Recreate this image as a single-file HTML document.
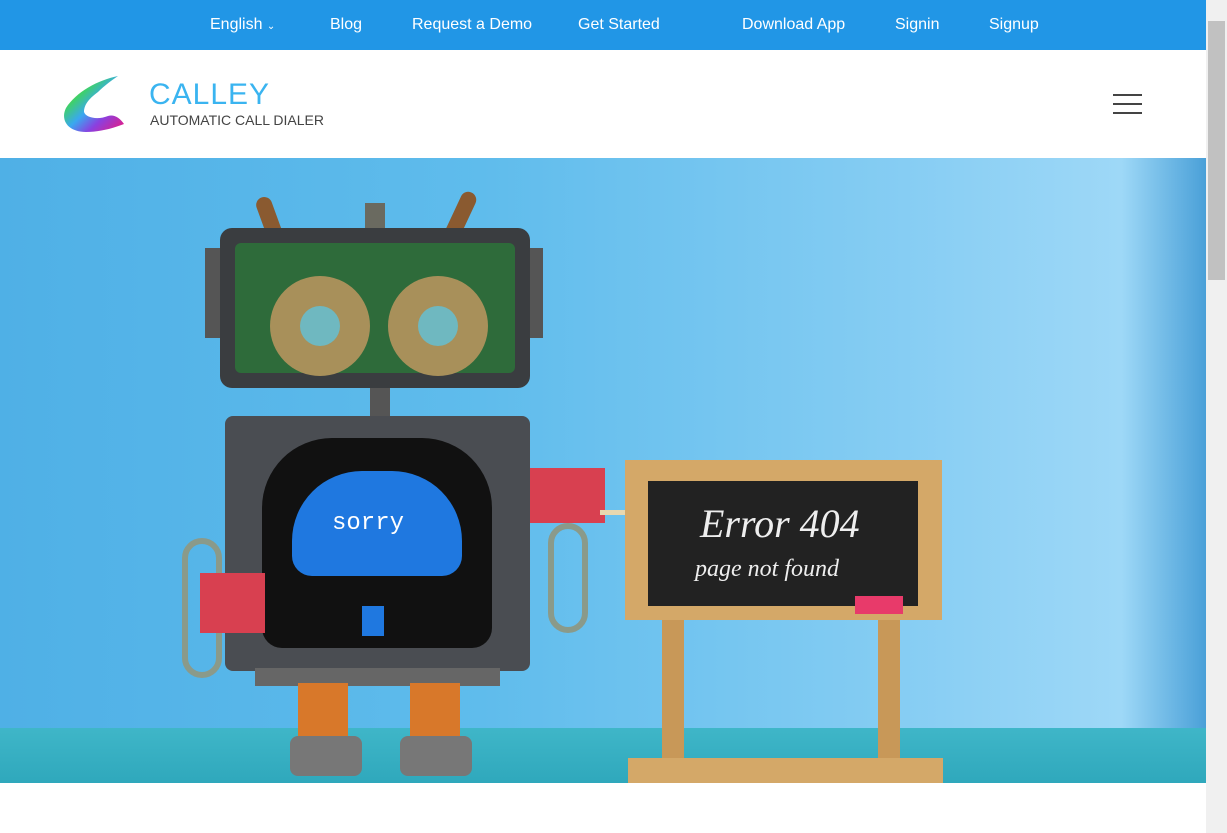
<!DOCTYPE html>
<html><head><meta charset="utf-8"><style>
*{margin:0;padding:0;box-sizing:border-box}
body{width:1227px;height:833px;overflow:hidden;background:#fff;font-family:"Liberation Sans",sans-serif;position:relative}
.top{position:absolute;left:0;top:0;width:1206px;height:50px;background:#2196e6}
.top span{position:absolute;top:16px;color:#fff;font-size:16px}
.sb{position:absolute;left:1206px;top:0;width:21px;height:833px;background:#f0f0f0}
.thumb{position:absolute;left:2px;top:21px;width:17px;height:259px;background:#c1c1c1}
.hero{position:absolute;left:0;top:158px;width:1206px;height:625px;background:linear-gradient(90deg,#4fb0e6 0%,#5fbcec 40%,#86cdf3 75%,#9ed8f7 93%,#4aa0d8 100%);overflow:hidden}
.floor{position:absolute;left:0;top:570px;width:100%;height:55px;background:linear-gradient(#3fb6c8,#2fa8bc)}
.d{position:absolute}
</style></head><body>
<div class="top">
<span style="left:210px">English <small style="font-size:10px">⌄</small></span>
<span style="left:330px">Blog</span>
<span style="left:412px">Request a Demo</span>
<span style="left:578px">Get Started</span>
<span style="left:742px">Download App</span>
<span style="left:895px">Signin</span>
<span style="left:989px">Signup</span>
</div>
<svg class="d" style="left:62px;top:74px" width="64" height="60" viewBox="0 0 64 60">
<defs><linearGradient id="g" x1="0" y1="0" x2="1" y2="1"><stop offset="0" stop-color="#f5e51a"/><stop offset=".3" stop-color="#3fd06a"/><stop offset=".5" stop-color="#3aa8f0"/><stop offset=".7" stop-color="#8a40e0"/><stop offset="1" stop-color="#f01878"/></linearGradient></defs>
<path d="M56 2 C36 6 14 18 4 34 C-2 46 6 58 24 58 C38 58 52 54 62 50 C58 44 52 40 46 42 C36 46 24 44 22 38 C22 30 28 24 36 18 C42 12 50 6 56 2Z" fill="url(#g)"/>
</svg>
<div class="d" style="left:149px;top:78px;font-size:30px;color:#3ab4f0;letter-spacing:1px">CALLEY</div>
<div class="d" style="left:150px;top:112px;font-size:14px;color:#444">AUTOMATIC CALL DIALER</div>
<div class="d" style="left:1113px;top:94px;width:29px;height:2px;background:#444"></div>
<div class="d" style="left:1113px;top:103px;width:29px;height:2px;background:#444"></div>
<div class="d" style="left:1113px;top:112px;width:29px;height:2px;background:#444"></div>
<div class="hero">
<div class="floor"></div>
<div class="d" style="left:262px;top:38px;width:16px;height:50px;background:#8a5a30;border-radius:8px;transform:rotate(-20deg)"></div>
<div class="d" style="left:452px;top:32px;width:16px;height:55px;background:#8a5a30;border-radius:8px;transform:rotate(25deg)"></div>
<div class="d" style="left:365px;top:45px;width:20px;height:45px;background:#6a6a60"></div>
<div class="d" style="left:205px;top:90px;width:20px;height:90px;background:#555"></div>
<div class="d" style="left:525px;top:90px;width:18px;height:90px;background:#555"></div>
<div class="d" style="left:220px;top:70px;width:310px;height:160px;background:#3a3d40;border-radius:12px"></div>
<div class="d" style="left:235px;top:85px;width:280px;height:130px;background:#2e6b3a;border-radius:6px"></div>
<div class="d" style="left:270px;top:118px;width:100px;height:100px;border-radius:50%;background:#a8905a"></div>
<div class="d" style="left:388px;top:118px;width:100px;height:100px;border-radius:50%;background:#a8905a"></div>
<div class="d" style="left:300px;top:148px;width:40px;height:40px;border-radius:50%;background:#6fb8c0"></div>
<div class="d" style="left:418px;top:148px;width:40px;height:40px;border-radius:50%;background:#6fb8c0"></div>
<div class="d" style="left:370px;top:230px;width:20px;height:30px;background:#555"></div>
<div class="d" style="left:225px;top:258px;width:305px;height:255px;background:#4a4d52;border-radius:8px"></div>
<div class="d" style="left:262px;top:280px;width:230px;height:210px;background:#111;border-radius:70px 70px 20px 20px"></div>
<div class="d" style="left:292px;top:313px;width:170px;height:105px;background:#1f78e0;border-radius:70px 70px 20px 20px"></div>
<div class="d" style="left:332px;top:352px;font-size:24px;color:#fff;font-family:'Liberation Mono',monospace">sorry</div>
<div class="d" style="left:362px;top:448px;width:22px;height:30px;background:#1f78e0"></div>
<div class="d" style="left:255px;top:510px;width:245px;height:18px;background:#666"></div>
<div class="d" style="left:298px;top:525px;width:50px;height:60px;background:#d8782a"></div>
<div class="d" style="left:410px;top:525px;width:50px;height:60px;background:#d8782a"></div>
<div class="d" style="left:290px;top:578px;width:72px;height:40px;background:#777;border-radius:8px"></div>
<div class="d" style="left:400px;top:578px;width:72px;height:40px;background:#777;border-radius:8px"></div>
<div class="d" style="left:182px;top:380px;width:40px;height:140px;border:6px solid #8a9a8a;border-radius:20px"></div>
<div class="d" style="left:200px;top:415px;width:65px;height:60px;background:#d84050"></div>
<div class="d" style="left:530px;top:310px;width:75px;height:55px;background:#d84050"></div>
<div class="d" style="left:548px;top:365px;width:40px;height:110px;border:6px solid #8a9a8a;border-radius:20px"></div>
<div class="d" style="left:600px;top:352px;width:95px;height:5px;background:#e8d8b0"></div>
<div class="d" style="left:625px;top:302px;width:317px;height:160px;background:#d4a868"></div>
<div class="d" style="left:648px;top:323px;width:270px;height:125px;background:#222"></div>
<div class="d" style="left:700px;top:342px;font-size:40px;color:#eee;font-style:italic;font-family:'Liberation Serif',serif">Error 404</div>
<div class="d" style="left:695px;top:398px;font-size:24px;color:#eee;font-style:italic;font-family:'Liberation Serif',serif">page not found</div>
<div class="d" style="left:855px;top:438px;width:48px;height:18px;background:#e83a6a"></div>
<div class="d" style="left:662px;top:462px;width:22px;height:160px;background:#c89858"></div>
<div class="d" style="left:878px;top:462px;width:22px;height:160px;background:#c89858"></div>
<div class="d" style="left:628px;top:600px;width:315px;height:25px;background:#d4a868"></div>
</div>
<div class="sb"><div class="thumb"></div></div>
</body></html>
